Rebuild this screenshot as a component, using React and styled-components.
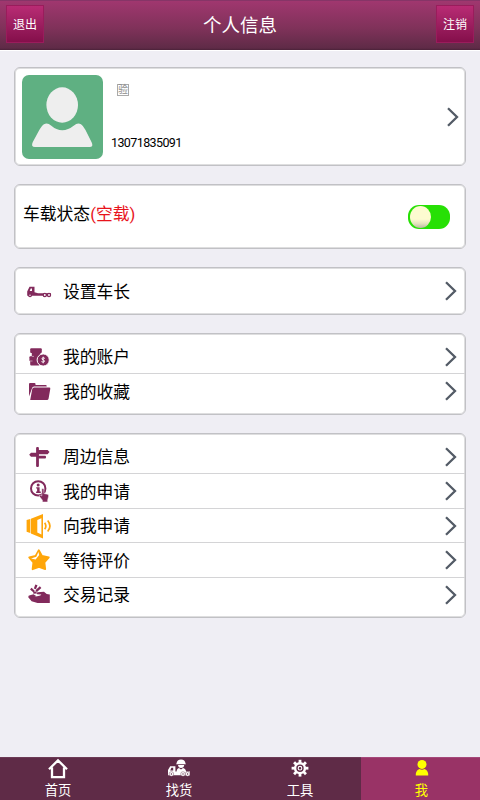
import React from "react";
import styled, { createGlobalStyle, css } from "styled-components";

const GlobalStyle = createGlobalStyle`
  * {
    box-sizing: border-box;
  }
  body {
    margin: 0;
    background: #efeef4;
    font-family: Roboto, "Noto Sans CJK SC", sans-serif;
    color: #000;
  }
  svg {
    display: block;
    flex-shrink: 0;
  }
`;

const Page = styled.div`
  width: 480px;
  height: 800px;
  display: flex;
  flex-direction: column;
  overflow: hidden;
`;

const Header = styled.header`
  height: 51px;
  flex-shrink: 0;
  display: flex;
  justify-content: space-between;
  align-items: flex-start;
  padding: 4px 6px 0;
  border-top: 1px solid #863567;
  border-bottom: 1px solid #fff;
  background: linear-gradient(#a0376f, #80325a 55%, #5f2b47 96%, #4b2239);
`;

const Title = styled.h1`
  margin: 0;
  padding-top: 8px;
  font-size: 18.5px;
  line-height: 27px;
  font-weight: 400;
  color: #fff;
`;

const HeaderButton = styled.button`
  width: 38px;
  height: 38px;
  padding: 2px 0 0;
  border: 1px solid #9a1c5c;
  background: linear-gradient(#b92b74, #9d1f60 50%, #850f4b);
  color: #fff;
  font-family: inherit;
  font-size: 12px;
  line-height: 34px;
`;

const Content = styled.main`
  flex: 1;
  display: flex;
  flex-direction: column;
  padding: 16px 14px 0;
`;

const Card = styled.section`
  width: 452px;
  height: ${(props) => props.$height};
  margin-bottom: ${(props) => props.$gap || "18px"};
  padding: ${(props) => props.$padding || "0"};
  flex-shrink: 0;
  background: #fff;
  border: 1px solid #c1c1c5;
  border-radius: 6px;
  box-shadow: inset 0 0 0 1px #dededf;
`;

const Profile = styled.div`
  display: flex;
  height: 100%;
  align-items: center;
  padding: 0 5px 0 7px;
`;

const Details = styled.div`
  flex: 1;
  height: 84px;
  padding: 9px 0 8px 8px;
  display: flex;
  flex-direction: column;
  justify-content: space-between;
`;

const Verify = styled.span`
  width: 12px;
  height: 12px;
  margin-left: 6px;
  border: 1px solid #aaa;
  color: #8c8c8c;
  font-size: 10px;
  line-height: 10px;
  text-align: center;
`;

const Phone = styled.span`
  font-size: 12.5px;
  line-height: 16px;
  letter-spacing: -0.6px;
`;

const Status = styled.div`
  display: flex;
  height: 100%;
  align-items: center;
  justify-content: space-between;
  padding: 0 15px 0 8px;
  font-size: 16.8px;

  p {
    margin: 0 0 6px;
    line-height: 24px;
  }
  span {
    color: #e8141c;
  }
`;

const Toggle = styled.div`
  width: 42px;
  height: 24px;
  padding: 1px 2px;
  border-radius: 11px;
  background: #27e005;
`;

const Knob = styled.div`
  width: 21px;
  height: 22px;
  border-radius: 50%;
  background: linear-gradient(#fdfbd0 60%, #e4e2bd 80%, #b9b8a0);
`;

const Row = styled.div`
  display: flex;
  align-items: center;
  height: 34.5px;
  padding: 0 7px 0 11px;
  font-size: 16.8px;
`;

const List = styled.div`
  ${Row} + ${Row} {
    box-shadow: 0 -1px 0 #d4d4d6;
  }
`;

const Label = styled.span`
  flex: 1;
  margin-left: 11px;
  padding-top: 1px;
  line-height: 24px;
`;

const TabBar = styled.nav`
  height: 43px;
  flex-shrink: 0;
  display: grid;
  grid-template-columns: 120px 121px 120px 119px;
  border-bottom: 1px solid #24101b;
`;

const Tab = styled.div`
  display: flex;
  flex-direction: column;
  align-items: center;
  padding-right: ${(props) => props.$shift || "0"};
  border-top: 1px solid #6c3a55;
  background: #5f2b47;
  color: #fff;
  font-size: 13.3px;
  line-height: 18px;

  svg {
    margin-bottom: 2px;
  }

  ${(props) =>
    props.$active &&
    css`
      padding-left: 2px;
      border-top-color: #a5487a;
      background: #993366;
      color: #ffff00;
    `}
`;

const PURPLE = "#822a5c";
const ORANGE = "#ffa60a";

const Avatar = () => (
  <svg width="81" height="84" viewBox="0 0 81 84">
    <rect width="81" height="84" rx="7" fill="#5fb082" />
    <ellipse cx="40.2" cy="30" rx="15.8" ry="17.7" fill="#eee" />
    <path
      d="M22 49.2q3.5-1.8 7 1.2 11 9.5 23 0 3.5-3 7-1.2 2 1.2 4.5 5.8l6 12q2.5 5-2 5H13q-4.5 0-2.2-5l6.5-12q2.7-4.6 4.7-5.8z"
      fill="#eee"
    />
  </svg>
);

const Chevron = () => (
  <svg width="14" height="22" viewBox="0 0 14 22" fill="none">
    <path d="M2 2.2L11 11L2 19.8" stroke="#535b66" strokeWidth="2.3" />
  </svg>
);

const Icon = ({ children, color = PURPLE }) => (
  <svg width="26" height="26" viewBox="0 0 26 26" fill={color}>
    {children}
  </svg>
);

const TruckIcon = () => (
  <Icon>
    <path
      fillRule="evenodd"
      d="M3.5 8.8H8.5V14.3L12 15.2H25V17.8H1.2V13.6zM4.7 10.6L3.7 13.1H6V10.6z"
    />
    <circle cx="4" cy="17.2" r="2" />
    <circle cx="18.8" cy="17" r="2.2" />
    <circle cx="23" cy="17" r="2.2" />
    <g fill="#fff">
      <circle cx="4" cy="17.2" r=".7" />
      <circle cx="18.8" cy="17" r=".9" />
      <circle cx="23" cy="17" r=".9" />
    </g>
  </Icon>
);

const CoinsIcon = () => (
  <Icon>
    <rect x="4.2" y="4.2" width="11.6" height="4.8" rx="1" />
    <rect x="5.8" y="8" width="8.7" height="5" />
    <rect x="3.4" y="12.3" width="10.5" height="5" rx="1" />
    <rect x="4.2" y="16.3" width="9.5" height="5.2" rx="1" />
    <path d="M3.8 17H6.5M6 12.4H8" stroke="#fff" strokeWidth=".5" />
    <circle cx="17.2" cy="16" r="6.1" stroke="#fff" strokeWidth="1" />
    <path
      d="M18.9 14.4Q17.2 13.4 16 14.2Q15.4 15.3 17.2 15.9Q19.2 16.7 18.3 17.7Q17 18.6 15.4 17.6M17.2 12.7V19.3"
      fill="none"
      stroke="#fff"
      strokeWidth=".9"
    />
  </Icon>
);

const FolderIcon = () => (
  <Icon>
    <path d="M3 18.5V6q0-1 1-1h4.5q1 0 1 1v.9h10.2q1 0 1 1v.5H8.1q-1.7 0-2 1.6z" />
    <path d="M8.3 9.4H23.2q1.3 0 1.1 1.3L22.6 20.5q-.3 1.5-1.6 1.5H4.2l2-10.8q.3-1.8 2.1-1.8z" />
  </Icon>
);

const SignIcon = () => (
  <Icon>
    <rect x="10.1" y="3" width="2.8" height="20" rx="1" />
    <path d="M12 6H21.6L23.5 8L21.6 10.2H12z" />
    <path d="M12.5 8.8H5L3.2 10.8L5 12.8H12.5z" />
    <rect x="12" y="11.8" width="8" height="2.8" rx="1" />
  </Icon>
);

const InfoIcon = () => (
  <Icon>
    <circle
      cx="12.2"
      cy="10.4"
      r="7.2"
      fill="none"
      stroke={PURPLE}
      strokeWidth="2"
    />
    <circle cx="12.2" cy="7" r="1.5" />
    <path d="M10.2 9.2H13.6V13.6H14.8V15H10.1V13.6H11.1V10.5H10.2z" />
    <path
      d="M16 10.5q1.5-.3 1.9 1v4l3.5.7q1.4.4 1.3 1.7l-1 4V24h-5.3v-1.8l-3-3.8q-.4-1.2 1-1.1l1.4.6V11.5q0-.8.2-1z"
      stroke="#fff"
      strokeWidth=".5"
    />
  </Icon>
);

const SpeakerIcon = () => (
  <Icon color={ORANGE}>
    <path
      fillRule="evenodd"
      d="M.6 7L4.3 6V20L.6 18.8zM4.9 5.8L17 1V25.4L4.9 20.4zM11.3 7V19.6L15.4 21.4V5.2z"
    />
    <path
      d="M18.7 9.7Q21 13 18.7 16.3M21.7 7.5Q26.2 13 21.7 18.5"
      fill="none"
      stroke={ORANGE}
      strokeWidth="1.7"
    />
  </Icon>
);

const StarIcon = () => (
  <Icon color={ORANGE}>
    <path
      d="M12.8 3.3L16 9L22.8 10.4L18.4 15.4L19.2 22.2L13 19.8L6.6 22.2L7.4 15.4L3.2 10.4L9.6 9z"
      stroke={ORANGE}
      strokeWidth="1.8"
      strokeLinejoin="round"
    />
    <path d="M12.4 5L13.2 8L9.6 12.6L5 11.4L10.3 9.8z" fill="#fff" />
  </Icon>
);

const HandIcon = () => (
  <Icon>
    <path d="M2.1 15L5.8 14.1L9 14.8L14.3 13.6L15.4 12.6L11.2 12.3Q9.8 11.2 11.5 10.2L18 9.8L20.7 12L23.8 12.6V21H11.5L5.6 19.2z" />
    <path d="M2.2 14.8Q2.2 13.6 4 13.2L7.5 12.2L10.5 14.3L7 15.6z" />
    <path
      d="M4.8 6.7L8 9.5M10.4 2.9L8.9 6.8M10.2 9.2L14.6 5.2M7.3 10.6L10.6 10.3"
      stroke={PURPLE}
      strokeWidth="2.3"
    />
  </Icon>
);

const HomeIcon = () => (
  <svg width="22" height="22" viewBox="0 0 22 22" fill="none">
    <path
      d="M2 11.2L11 2.4L20 11.2M5 9.4V19.2H17V9.4"
      stroke="#fff"
      strokeWidth="2.3"
    />
  </svg>
);

const DriverIcon = () => (
  <svg width="24" height="22" viewBox="0 0 24 22" fill="#fff">
    <path
      fillRule="evenodd"
      d="M3.2 8.3H8.4V13.5H23V17.2H1V12zM4.4 9.8L3.2 12.5H6.2V9.8z"
    />
    <path d="M9.5 5.5Q10 1.5 14 1.5Q18 1.5 18.5 5.5L19 6.3H9z" />
    <path d="M11 7H17.2Q17 10 14 10Q11.3 10 11 7z" />
    <path d="M9.5 14.2Q9.7 10.6 12 10.1L14 11.6L16 10.1Q18.8 10.6 19.2 14.2z" />
    <g stroke="#5f2b47" strokeWidth=".4">
      <circle cx="4.4" cy="16" r="2.3" />
      <circle cx="16" cy="16" r="2.3" />
      <circle cx="20.6" cy="16" r="2.3" />
    </g>
    <g fill="#5f2b47">
      <circle cx="4.4" cy="16" r=".7" />
      <circle cx="16" cy="16" r=".7" />
      <circle cx="20.6" cy="16" r=".7" />
    </g>
  </svg>
);

const GearIcon = () => (
  <svg width="20" height="22" viewBox="0 0 20 22" fill="none" stroke="#fff">
    <circle cx="10" cy="10.2" r="4.9" strokeWidth="2.4" />
    {[0, 45, 90, 135, 180, 225, 270, 315].map((angle) => (
      <path
        key={angle}
        d="M10 1.8V5"
        strokeWidth="2.8"
        transform={`rotate(${angle} 10 10.2)`}
      />
    ))}
    <circle cx="10" cy="10.2" r="1.8" strokeWidth="1.1" />
  </svg>
);

const UserIcon = () => (
  <svg width="14" height="22" viewBox="0 0 14 22" fill="#ffff00">
    <circle cx="7" cy="6.4" r="4.5" />
    <path d="M.8 17.5V15.8Q1.3 12.2 4.5 11Q7 12.4 9.5 11Q12.7 12.2 13.2 15.8V17.5z" />
  </svg>
);

const MenuRow = ({ icon, label }) => (
  <Row>
    {icon}
    <Label>{label}</Label>
    <Chevron />
  </Row>
);

const App = () => {
  return (
    <Page>
      <GlobalStyle />
      <Header>
        <HeaderButton>退出</HeaderButton>
        <Title>个人信息</Title>
        <HeaderButton>注销</HeaderButton>
      </Header>
      <Content>
        <Card $height="99px">
          <Profile>
            <Avatar />
            <Details>
              <Verify>验</Verify>
              <Phone>13071835091</Phone>
            </Details>
            <Chevron />
          </Profile>
        </Card>
        <Card $height="65px">
          <Status>
            <p>
              车载状态<span>(空载)</span>
            </p>
            <Toggle>
              <Knob />
            </Toggle>
          </Status>
        </Card>
        <Card $height="48px" $padding="6px 0">
          <MenuRow icon={<TruckIcon />} label="设置车长" />
        </Card>
        <Card $height="82px" $padding="5.5px 0">
          <List>
            <MenuRow icon={<CoinsIcon />} label="我的账户" />
            <MenuRow icon={<FolderIcon />} label="我的收藏" />
          </List>
        </Card>
        <Card $height="185px" $padding="5.5px 0" $gap="0">
          <List>
            <MenuRow icon={<SignIcon />} label="周边信息" />
            <MenuRow icon={<InfoIcon />} label="我的申请" />
            <MenuRow icon={<SpeakerIcon />} label="向我申请" />
            <MenuRow icon={<StarIcon />} label="等待评价" />
            <MenuRow icon={<HandIcon />} label="交易记录" />
          </List>
        </Card>
      </Content>
      <TabBar>
        <Tab $shift="4px">
          <HomeIcon />
          首页
        </Tab>
        <Tab $shift="3px">
          <DriverIcon />
          找货
        </Tab>
        <Tab $shift="2px">
          <GearIcon />
          工具
        </Tab>
        <Tab $active>
          <UserIcon />我
        </Tab>
      </TabBar>
    </Page>
  );
};

export default App;
